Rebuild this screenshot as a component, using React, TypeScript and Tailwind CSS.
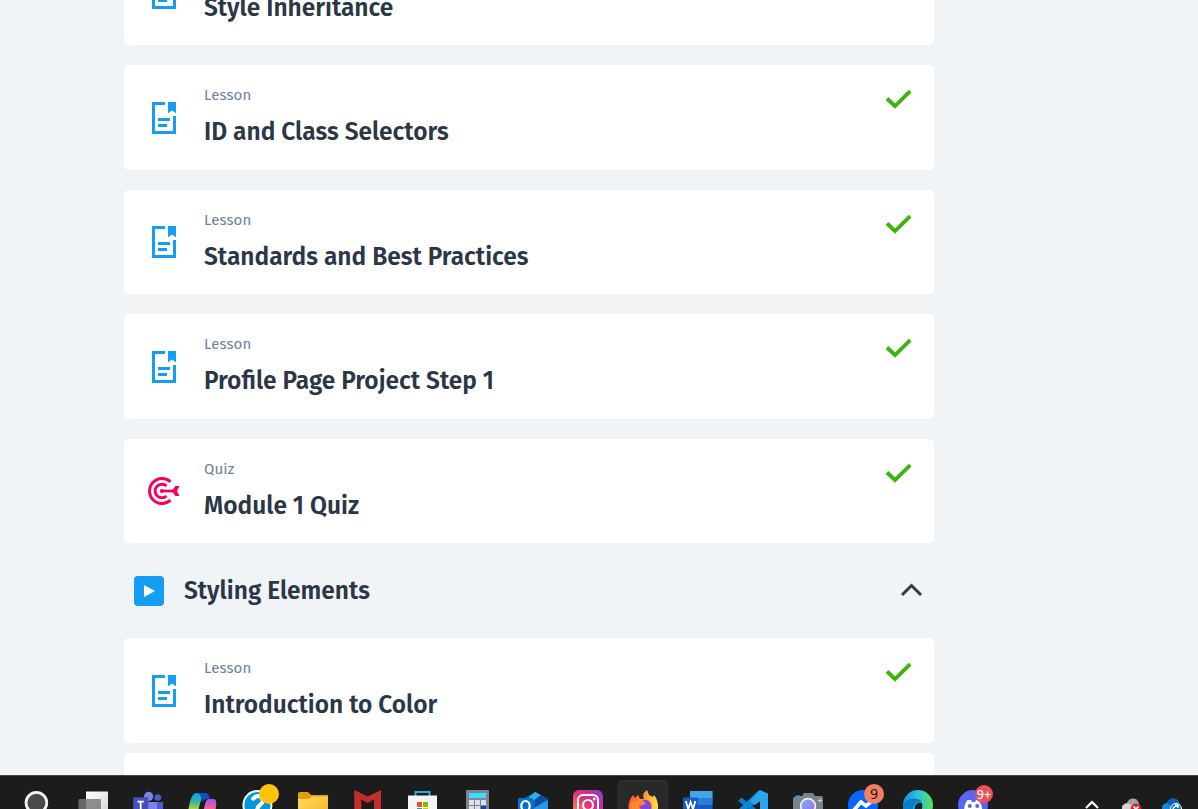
import { type ReactNode } from "react";

const titleClass = "font-['Fira_Sans','Noto_Sans',sans-serif] text-[24.5px] leading-[34px] font-semibold whitespace-nowrap text-[#2b3747]";

function LessonIcon() {
  return (
    <svg className="mt-px" width="24" height="32" viewBox="0 0 24 32" fill="#149df3">
      <path d="M0 0H13V3H3V29H21V14H24V32H0Z" />
      <path d="M16 0H24V11.2L20 8.6L16 11.2Z" />
      <path d="M6 16H18V19H6ZM6 22H15V25H6Z" />
    </svg>
  );
}

function QuizIcon() {
  return (
    <svg width="32" height="28" viewBox="0 0 32 28" fill="none" stroke="#f7005e" strokeWidth="3">
      <path d="M22.5 4.8A12.5 12.5 0 1 0 22.5 23.2" />
      <path d="M18.5 9A6.8 6.8 0 1 0 18.5 19" strokeWidth="2.9" />
      <path d="M14 14H27" strokeWidth="2.8" />
      <circle cx="13.8" cy="14" r="2.1" fill="#f7005e" stroke="none" />
      <path d="M23.5 14L27.5 9H31.5L29 14L31.5 19H27.5Z" fill="#f7005e" stroke="none" />
    </svg>
  );
}

function Card({ kind, title }: { kind: "Lesson" | "Quiz"; title: string }) {
  return (
    <article className="flex h-[104.5px] shrink-0 rounded-[5px] bg-white">
      <div className="flex w-20 shrink-0 items-center justify-center">{kind === "Lesson" ? <LessonIcon /> : <QuizIcon />}</div>
      <div className="min-w-0 flex-1 pt-5">
        <p className="font-['Fira_Sans','Noto_Sans',sans-serif] text-[15px] leading-5 tracking-[0.1px] text-[#6b829d]">{kind}</p>
        <h3 className={`mt-[10px] ${titleClass}`}>{title}</h3>
      </div>
      <svg className="mt-[23px] mr-[22px]" width="27" height="22" viewBox="0 0 27 22" fill="none" stroke="#3eb30c" strokeWidth="3.8">
        <path d="M2 10.5L10 18L25.2 3.2" />
      </svg>
    </article>
  );
}

function Slot({ children, active }: { children: ReactNode; active?: boolean }) {
  return (
    <div className="flex justify-center">
      <svg width="56" height="33" viewBox="-28 1 56 33" className="shrink-0">
        {active && <rect x="-24.8" y="5.7" width="49.2" height="40" rx="4" fill="#292929" stroke="#353535" />}
        {children}
      </svg>
    </div>
  );
}

function Taskbar() {
  return (
    <footer className="flex h-[34px] shrink-0 justify-between overflow-hidden border-t border-[#42474a] bg-[#1c1c1c]">
      <svg width="0" height="0" className="absolute">
        <defs>
          <linearGradient id="pane" x2="1" y2="1"><stop stopColor="#fff" /><stop offset="1" stopColor="#d5d5d5" /></linearGradient>
          <linearGradient id="coLeft" x2="0" y2="1"><stop stopColor="#129df2" /><stop offset=".5" stopColor="#30b89c" /><stop offset="1" stopColor="#e8d51e" /></linearGradient>
          <linearGradient id="coRight" x2="0" y2="1"><stop stopColor="#a354ee" /><stop offset=".55" stopColor="#e95aa4" /><stop offset="1" stopColor="#ff815c" /></linearGradient>
          <linearGradient id="folder" x2="1" y2="1"><stop stopColor="#ffdc68" /><stop offset="1" stopColor="#f4b522" /></linearGradient>
          <linearGradient id="insta" x1="1" y1="0" x2="0" y2="1"><stop stopColor="#8b39cf" /><stop offset=".5" stopColor="#e72f73" /><stop offset="1" stopColor="#ffb13b" /></linearGradient>
          <linearGradient id="fox" x1="0" x2="1"><stop stopColor="#ff552e" /><stop offset=".55" stopColor="#ff982b" /><stop offset="1" stopColor="#ffe642" /></linearGradient>
          <linearGradient id="lens" x2="1" y2="1"><stop stopColor="#66b9fa" /><stop offset="1" stopColor="#b55be4" /></linearGradient>
          <linearGradient id="edge" x2="1"><stop stopColor="#148ddd" /><stop offset=".5" stopColor="#29c4dc" /><stop offset="1" stopColor="#62dc54" /></linearGradient>
        </defs>
      </svg>
      <div className="ml-[9px] grid w-[992px] grid-cols-18">
        <Slot><circle cx="-.6" cy="27.8" r="10.4" fill="#4a4a4a" stroke="#f2f2f2" strokeWidth="2.8" /></Slot>
        <Slot>
          <path d="M-6 16.5H16V40H-6Z" fill="url(#pane)" /><rect x="-13.5" y="24" width="22.5" height="20" rx="1" fill="#777" opacity=".82" />
        </Slot>
        <Slot>
          <circle cx="1.6" cy="21.4" r="4.6" fill="#7b83eb" /><circle cx="10.8" cy="22.5" r="3.3" fill="#5059c9" />
          <path d="M0 27H10V40H0Z" fill="#7b83eb" /><path d="M10 27H16V40H10Z" fill="#5059c9" />
          <rect x="-13.8" y="22.2" width="15" height="16" rx="1" fill="#464eb8" /><path d="M-9.5 26.6H-3.2M-6.3 26.6V38" stroke="#fff" strokeWidth="1.8" />
        </Slot>
        <Slot>
          <path d="M-14 36C-12 27-11 18-5 18H4C0 20-1 25-4 36Z" fill="url(#coLeft)" />
          <path d="M-5 18H3C7 18 7 21 8 24C3 23 2 25 0 27C-1 23 0 20-5 18Z" fill="#174fc2" />
          <path d="M1 38C3 31 3 24 7 24H11C15 24 15 28 13 37Z" fill="url(#coRight)" />
        </Slot>
        <Slot>
          <circle cx=".4" cy="30" r="14" fill="#0796d8" stroke="#eef8fb" strokeWidth="2" />
          <path d="M-5 25Q0 19 4 22Q8 26 3 30Q0 32 0 37" fill="none" stroke="#fff" strokeWidth="4" />
          <circle cx="12" cy="19" r="10" fill="#ffc30d" />
        </Slot>
        <Slot>
          <path d="M-14 34V18.5Q-14 17-12.5 17H-4L-1 20H16V34Z" fill="#e39d08" /><path d="M-14 24H-3L0 21.5H15Q16 21.5 16 22.5V40H-14Z" fill="url(#folder)" />
        </Slot>
        <Slot><path d="M-12.7 15L.7 21.4L14 15V38H7V24.5L.7 28L-5.7 24.5V38H-12.7Z" fill="#c22e2d" /></Slot>
        <Slot>
          <path d="M-6.5 22V17H7.5V22" fill="none" stroke="#24aee8" strokeWidth="2" /><path d="M-14 20.5H15V40H-14Z" fill="#f4f4f4" />
          <path d="M-5 27H0V32H-5Z" fill="#f25022" /><path d="M1 27H6V32H1Z" fill="#7fba00" /><path d="M-5 33H0V38H-5Z" fill="#00a4ef" /><path d="M1 33H6V38H1Z" fill="#ffb900" />
        </Slot>
        <Slot>
          <rect x="-11" y="15" width="23" height="28" rx="1" fill="#7b858f" /><rect x="-8" y="18" width="17" height="5" fill="#40d8ff" />
          <path d="M-8 25H-3V30H-8ZM-2 25H3V30H-2ZM4 25H9V30H4ZM-8 31H-3V36H-8ZM-2 31H3V36H-2Z" fill="#dce1e5" /><path d="M4 31H9V36H4Z" fill="#084d91" />
        </Slot>
        <Slot>
          <path d="M-10 24L2 17L15 24V40H-10Z" fill="#0a65bb" /><path d="M-4 22L2 17L8 20L-2 27Z" fill="#32aee8" /><path d="M2 25L8 20L15 24L2 32Z" fill="#0d4ca0" /><path d="M1 33L15 25V40H1Z" fill="#2798e8" />
          <rect x="-15" y="23" width="15" height="17" rx="1" fill="#0872cb" /><ellipse cx="-7.5" cy="31" rx="4.2" ry="5" fill="none" stroke="#fff" strokeWidth="2.2" />
        </Slot>
        <Slot>
          <rect x="-15" y="15" width="30" height="30" rx="6" fill="url(#insta)" /><rect x="-10" y="20" width="20" height="20" rx="5" fill="none" stroke="#fff" strokeWidth="2" />
          <circle cy="30" r="5" fill="none" stroke="#fff" strokeWidth="2.2" /><circle cx="6.2" cy="24" r="1.4" fill="#fff" />
        </Slot>
        <Slot active>
          <path d="M-14 36C-16 28-12 23-10 20L-8 23L-5 20L-3 24H1C-1 20 1 17 4 15L6 20L10 22L11 20C15 25 16 31 14 38Z" fill="url(#fox)" />
          <path d="M-5 36C-5 29-1 24 4 25C9 27 9 32 8 36Z" fill="#8546df" /><path d="M-12 27L-3 25L3 28Q0 31-4 31Q-3 34 0 36H-13Z" fill="#ff872a" />
        </Slot>
        <Slot>
          <rect x="-8" y="16" width="22.5" height="26" rx="1" fill="#185abd" /><path d="M-8 16H14.5V23H-8Z" fill="#41a5ee" /><path d="M-8 23H14.5V30H-8Z" fill="#2b7cd3" />
          <rect x="-15" y="22.5" width="15" height="17" rx="1" fill="#185abd" /><path d="M-12.2 26L-9.8 34L-7.4 27L-5 34L-2.6 26" fill="none" stroke="#fff" strokeWidth="1.8" />
        </Slot>
        <Slot>
          <path d="M-15 26L-11.5 22.5L12 41H5Z" fill="#087bc2" /><path d="M6 15L-14 34L-11 37L9 25Z" fill="#0c88d2" /><path d="M7 15L15 18.5V40H7V26L2 30L-3 26Z" fill="#27a5ef" />
        </Slot>
        <Slot>
          <path d="M-15 23L-12 21H-6L-4 18H5L7 21H14L15 23V40H-15Z" fill="#7a838b" /><path d="M-12 20.5H-8L-7 22H-13Z" fill="#18aee8" />
          <circle cy="31" r="7.3" fill="url(#lens)" stroke="#eee" strokeWidth="1.8" /><path d="M10 25.5H14M12 23.5V27.5" stroke="#d2d6d8" />
        </Slot>
        <Slot>
          <circle cy="30" r="15" fill="#0866ff" /><path d="M-9 35L-2 27L3 31L9 26" fill="none" stroke="#fff" strokeWidth="3.6" /><circle cx="11" cy="19" r="10" fill="#f47e64" />
          <text x="11" y="24" textAnchor="middle" fontFamily="Noto Sans" fontSize="14" fill="#151515">9</text>
        </Slot>
        <Slot>
          <circle cy="30" r="15" fill="url(#edge)" /><path d="M-15 30C-12 23 0 21 4 27C-2 26-6 30-5 38H-15Z" fill="#087cc4" /><path d="M-3 36C-5 30 0 26 4 28Q5 32 3 36Z" fill="#17242c" />
        </Slot>
        <Slot>
          <circle cy="30" r="15" fill="#5865f2" /><path d="M-9 37C-9 30-7 26-5 25L-2 25L-1 27H2L3 25L6 26Q10 31 9 37Z" fill="#fff" />
          <circle cx="-3.2" cy="31" r="2" fill="#5865f2" /><circle cx="4.2" cy="31" r="2" fill="#5865f2" /><circle cx="11" cy="19" r="9" fill="#ed5057" />
          <text x="11" y="23.5" textAnchor="middle" fontFamily="Noto Sans" fontSize="12.5" fontWeight="500" fill="#fff">9+</text>
        </Slot>
      </div>
      <svg width="138" height="33" viewBox="0 1 138 33">
        <path d="M26 33L32 27L38 33" fill="none" stroke="#fff" strokeWidth="2.2" />
        <path d="M62 36V31Q64 28 67 28Q69 22 76 24Q80 27 80 35Z" fill="#a2a2a2" /><path d="M62 32Q65 27 70 29L77 36H62Z" fill="#d5d5d5" />
        <circle cx="76" cy="34" r="5.4" fill="#db202b" /><path d="M73.5 31.5L78.5 36.5M78.5 31.5L73.5 36.5" stroke="#fff" strokeWidth="1.7" />
        <path d="M102 36V31Q104 28 107 28Q109 22 116 24Q121 27 120 36Z" fill="#1686df" /><path d="M107 28Q109 22 116 24L119 29L111 31Z" fill="#0863bf" />
        <circle cx="116" cy="34" r="5.5" fill="#176eb8" stroke="#fff" strokeWidth="1" /><path d="M113 35Q113 31 118 31M115 30H118V33" fill="none" stroke="#fff" strokeWidth="1.3" />
      </svg>
    </footer>
  );
}

export default function App() {
  return (
    <div className="flex h-[809px] w-[1198px] flex-col overflow-hidden bg-[#f0f4f7]">
      <main className="h-[775px] shrink-0 overflow-hidden pl-[124px]">
        <div className="-mt-[59.4px] flex w-[810px] flex-col">
          <section className="flex flex-col gap-5">
            <Card kind="Lesson" title="Style Inheritance" />
            <Card kind="Lesson" title="ID and Class Selectors" />
            <Card kind="Lesson" title="Standards and Best Practices" />
            <Card kind="Lesson" title="Profile Page Project Step 1" />
            <Card kind="Quiz" title="Module 1 Quiz" />
          </section>
          <header className="flex h-[95px] items-center px-2.5">
            <svg width="30" height="30" viewBox="0 0 30 30">
              <rect width="30" height="30" rx="4" fill="#149df3" />
              <path d="M10 9L21 15L10 21Z" fill="#fff" />
            </svg>
            <h2 className={`ml-5 flex-1 ${titleClass}`}>Styling Elements</h2>
            <svg className="mr-px mb-0.5" width="24" height="16" viewBox="0 0 24 16" fill="none" stroke="#2d3b4b" strokeWidth="3">
              <path d="M3 13L12.5 3.5L22 13" />
            </svg>
          </header>
          <section className="flex flex-col gap-2.5">
            <Card kind="Lesson" title="Introduction to Color" />
            <article className="h-[104.5px] shrink-0 rounded-[5px] bg-white" />
          </section>
        </div>
      </main>
      <Taskbar />
    </div>
  );
}
